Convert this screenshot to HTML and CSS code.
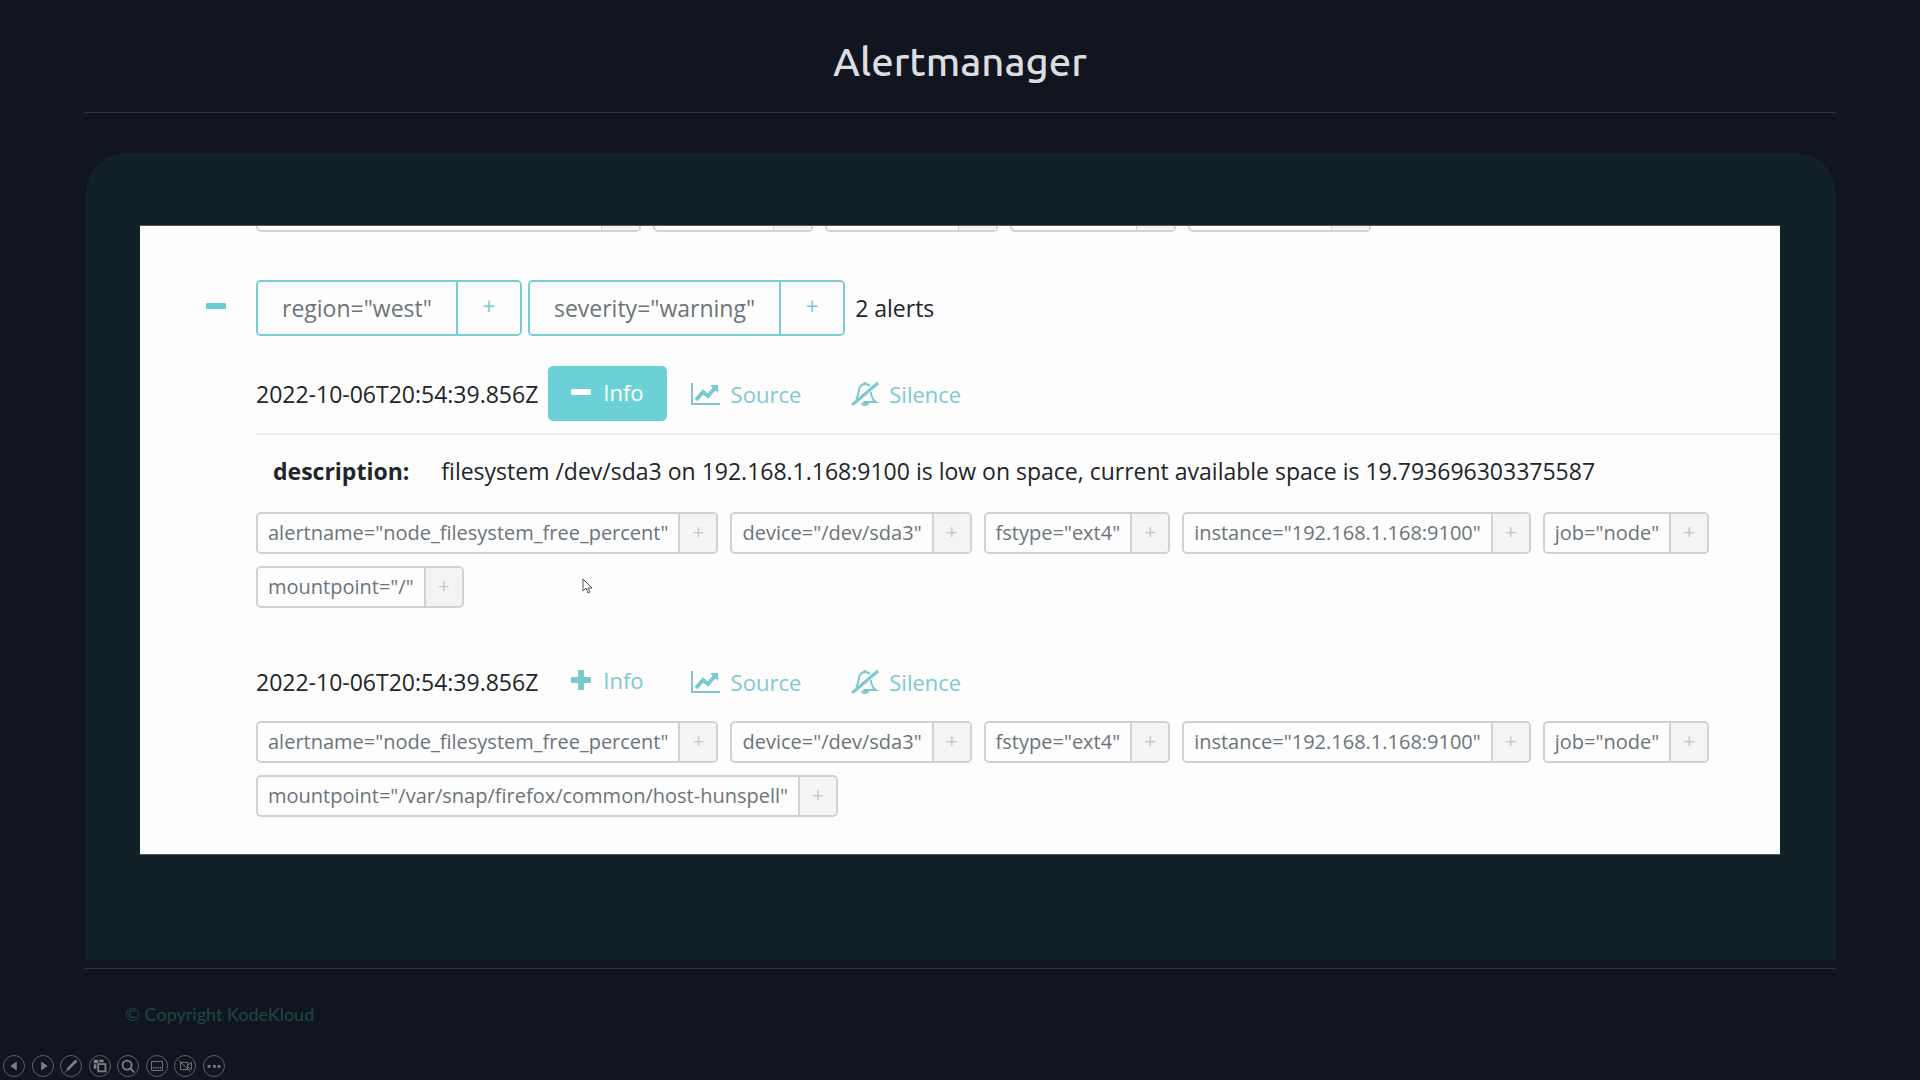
FILE: index.html
```html
<!DOCTYPE html>
<html lang="en">
<head>
    <meta charset="UTF-8">
    <meta name="viewport" content="width=device-width, initial-scale=1.0">
    <title>Alertmanager</title>
    <link rel="stylesheet" href="styles.css">
</head>
<body>
    <!-- shared icons -->
    <svg class="icon-defs" aria-hidden="true">
        <symbol id="icon-minus" viewBox="0 0 20 20"><rect x="0" y="7" width="20" height="6" rx="1"/></symbol>
        <symbol id="icon-plus" viewBox="0 0 20 20"><path d="M7 1q0-1 1-1h4q1 0 1 1v6h6q1 0 1 1v4q0 1-1 1h-6v6q0 1-1 1H8q-1 0-1-1v-6H1q-1 0-1-1V8q0-1 1-1h6z"/></symbol>
        <symbol id="icon-chart" viewBox="0 0 30 24">
            <path d="M1 1v21h28" fill="none" stroke="currentColor" stroke-width="2"/>
            <path d="M5 18l7-8 5 4 7-8" fill="none" stroke="currentColor" stroke-width="4"/>
            <path d="M19 3h8v8z"/>
        </symbol>
        <symbol id="icon-bell" viewBox="0 0 28 26">
            <path d="M5 18C8 15 7 9 9 6q2-3 5-3 3 0 5 2M20 11c0 5 2 8 5 10H12" fill="none" stroke="currentColor" stroke-width="2"/>
            <path d="M12 3a2 2 0 0 1 4 0zM10 22h8a4 3 0 0 1-8 0z"/>
            <path d="M1 24L27 2" fill="none" stroke="currentColor" stroke-width="3"/>
        </symbol>
    </svg>

    <header>
        <h1>Alertmanager</h1>
    </header>

    <main>
        <div class="panel">
            <div class="alerts">
                <div class="cut-row" aria-hidden="true">
                    <span class="cut cut-1"></span>
                    <span class="cut cut-2"></span>
                    <span class="cut cut-3"></span>
                    <span class="cut cut-4"></span>
                    <span class="cut cut-5"></span>
                </div>

                <div class="group">
                    <button class="collapse" aria-label="Collapse group"><svg><use href="#icon-minus"/></svg></button>
                    <span class="chip chip-large"><span>region="west"</span><button>+</button></span>
                    <span class="chip chip-large"><span>severity="warning"</span><button>+</button></span>
                    <span class="count">2 alerts</span>
                </div>

                <section class="alert">
                    <div class="alert-head">
                        <span class="time">2022-10-06T20:54:39.856Z</span>
                        <button class="action info active"><svg><use href="#icon-minus"/></svg>Info</button>
                        <a class="action source" href="#"><svg><use href="#icon-chart"/></svg>Source</a>
                        <a class="action silence" href="#"><svg><use href="#icon-bell"/></svg>Silence</a>
                    </div>
                    <table class="annotations">
                        <tr>
                            <th>description:</th>
                            <td>filesystem /dev/sda3 on 192.168.1.168:9100 is low on space, current available space is 19.793696303375587</td>
                        </tr>
                    </table>
                    <div class="labels">
                        <span class="chip"><span>alertname="node_filesystem_free_percent"</span><button>+</button></span>
                        <span class="chip"><span>device="/dev/sda3"</span><button>+</button></span>
                        <span class="chip"><span>fstype="ext4"</span><button>+</button></span>
                        <span class="chip"><span>instance="192.168.1.168:9100"</span><button>+</button></span>
                        <span class="chip"><span>job="node"</span><button>+</button></span>
                        <span class="chip"><span>mountpoint="/"</span><button>+</button></span>
                    </div>
                    <svg class="cursor" viewBox="0 0 11 16"><path d="M1 1v12l3-3 2 5 2-1-2-4h4z" fill="#fff" stroke="#555"/></svg>
                </section>

                <section class="alert">
                    <div class="alert-head">
                        <span class="time">2022-10-06T20:54:39.856Z</span>
                        <button class="action info"><svg><use href="#icon-plus"/></svg>Info</button>
                        <a class="action source" href="#"><svg><use href="#icon-chart"/></svg>Source</a>
                        <a class="action silence" href="#"><svg><use href="#icon-bell"/></svg>Silence</a>
                    </div>
                    <div class="labels">
                        <span class="chip"><span>alertname="node_filesystem_free_percent"</span><button>+</button></span>
                        <span class="chip"><span>device="/dev/sda3"</span><button>+</button></span>
                        <span class="chip"><span>fstype="ext4"</span><button>+</button></span>
                        <span class="chip"><span>instance="192.168.1.168:9100"</span><button>+</button></span>
                        <span class="chip"><span>job="node"</span><button>+</button></span>
                        <span class="chip"><span>mountpoint="/var/snap/firefox/common/host-hunspell"</span><button>+</button></span>
                    </div>
                </section>
            </div>
        </div>
    </main>

    <footer>
        <p>© Copyright KodeKloud</p>
    </footer>

    <nav class="slide-controls" aria-label="Slide controls">
        <button aria-label="Previous"><svg viewBox="0 0 22 22"><path class="fill" d="M14 6v10l-7-5z"/></svg></button>
        <button aria-label="Next"><svg viewBox="0 0 22 22"><path class="fill" d="M9 6v10l7-5z"/></svg></button>
        <button aria-label="Pen"><svg viewBox="0 0 22 22"><path d="M7 15l10-10" stroke-width="3"/><path d="M4 18l4-3"/></svg></button>
        <button aria-label="All slides"><svg viewBox="0 0 22 22"><path class="fill" d="M4 4h5v4H4zM10 4h5v3h-5zM4 9h3v5H4z"/><path d="M9 9h8v8H9z" stroke-width="2"/></svg></button>
        <button aria-label="Zoom"><svg viewBox="0 0 22 22"><circle cx="10" cy="10" r="5" stroke-width="2"/><path d="M13 13l5 5" stroke-width="2"/></svg></button>
        <button aria-label="Subtitles"><svg viewBox="0 0 22 22"><path d="M5 6h12v10H5zM7 14v-2m2 2v-2m2 2v-2m2 2v-2m2 2v-2"/></svg></button>
        <button aria-label="Camera"><svg viewBox="0 0 22 22"><path d="M6 7h8v8H6zM14 10l4-3v8l-4-3M4 5l13 12"/></svg></button>
        <button aria-label="More"><svg viewBox="0 0 22 22"><path class="fill" d="M4 10h3v3H4zM10 10h3v3h-3zM15 10h3v3h-3z"/></svg></button>
    </nav>
</body>
</html>
```

FILE: styles.css
```css
* {
    box-sizing: border-box;
}

body {
    margin: 0;
    min-height: 100vh;
    display: flex;
    flex-direction: column;
    background-color: #11151f;
    font-family: "Open Sans", "Noto Sans", sans-serif;
}

button {
    font-family: inherit;
    cursor: pointer;
}

.icon-defs {
    display: none;
}

header {
    margin: 0 84px;
    padding: 34px 0 22px;
    border-bottom: 1px solid #30343c;
}

h1 {
    margin: 0;
    color: #dcdddf;
    font-family: Ubuntu, "Noto Sans", sans-serif;
    font-size: 40px;
    font-weight: 500;
    line-height: 56px;
    text-align: center;
}

main {
    flex: 1;
    display: flex;
    margin: 0 84px;
    padding: 40px 0 8px 2px;
    border-bottom: 1px solid #30343c;
}

.panel {
    flex: 1;
    padding: 72px 56px 104px 54px;
    background-color: #122127;
    border-radius: 40px 40px 0 0;
}

.alerts {
    padding: 0 0 37px 116px;
    background-color: #fdfdfd;
    border-top: 1px solid #54585b;
    border-bottom: 1px solid #54585b;
    overflow: hidden;
    color: #212529;
    font-size: 23px;
    line-height: 32px;
}

/* label row scrolled almost out of view */
.cut-row {
    display: flex;
    gap: 12px;
    margin-bottom: 48px;
}

.cut {
    height: 6px;
    display: flex;
    justify-content: flex-end;
    border: 2px solid #ced4da;
    border-top: none;
    border-radius: 0 0 5px 5px;
}

.cut::after {
    content: "";
    width: 37px;
    background-color: #f5f5f5;
    border-left: 1px solid #ced4da;
}

.cut-1 {
    width: 385px;
}

.cut-2 {
    width: 160px;
}

.cut-3 {
    width: 173px;
}

.cut-4 {
    width: 166px;
}

.cut-5 {
    width: 183px;
}

.group {
    display: flex;
    align-items: center;
    gap: 6px;
    margin-left: -50px;
}

.collapse {
    display: flex;
    width: 44px;
    padding: 0 0 4px;
    border: none;
    background: none;
    color: #69cbd2;
}

.collapse svg,
.info svg {
    width: 20px;
    height: 20px;
}

svg {
    fill: currentColor;
}

.chip {
    display: inline-flex;
    height: 42px;
    border: 2px solid #cfd1d2;
    border-radius: 5px;
    color: #6c7478;
    font-size: 20px;
    line-height: 38px;
    overflow: hidden;
}

.chip span {
    padding: 0 10px;
}

.chip button {
    width: 38px;
    padding: 0 0 4px;
    border: none;
    border-left: 2px solid #cfd1d2;
    background-color: #f4f4f4;
    color: #c3c6c8;
    font-size: 20px;
}

.chip-large {
    height: 56px;
    border-color: #79cdd0;
    font-size: 23px;
    line-height: 52px;
}

.chip-large span {
    padding: 0 24px;
}

.chip-large button {
    width: 64px;
    border-color: #79cdd0;
    background-color: #fdfdfd;
    color: #79cdd0;
    font-size: 23px;
}

.count {
    margin-left: 4px;
}

.alert {
    position: relative;
}

.alert-head {
    display: flex;
    align-items: center;
    padding: 30px 0 12px;
}

.time {
    margin-right: 10px;
}

.action {
    display: flex;
    align-items: center;
    gap: 10px;
    color: #7bc9d0;
    font-size: 22px;
    line-height: 32px;
    text-decoration: none;
}

.info {
    height: 55px;
    gap: 12px;
    padding: 0 23px 4px;
    border: none;
    border-radius: 5px;
    background: none;
}

.info.active {
    background-color: #6bd1d7;
    color: #fff;
}

.source {
    margin-left: 24px;
}

.source svg {
    width: 30px;
    height: 24px;
}

.silence {
    margin-left: 50px;
}

.silence svg {
    width: 28px;
    height: 26px;
}

.annotations {
    width: 100%;
    border-top: 2px solid #ebedee;
    border-collapse: collapse;
}

.annotations th {
    width: 1px;
    padding: 20px 0 25px 17px;
    white-space: nowrap;
}

.annotations td {
    padding: 20px 0 25px 32px;
}

.labels {
    display: flex;
    flex-wrap: wrap;
    gap: 12px;
}

.alert + .alert {
    margin-top: 16px;
}

.cursor {
    position: absolute;
    top: 242px;
    left: 326px;
    width: 11px;
    height: 16px;
}

footer {
    padding: 31px 125px 27px;
}

footer p {
    margin: 0;
    color: #1f4643;
    font-family: Lato, sans-serif;
    font-size: 18px;
    line-height: 28px;
}

.slide-controls {
    display: flex;
    justify-content: space-between;
    width: 225px;
    padding: 0 0 3px 3px;
}

.slide-controls button {
    display: flex;
    padding: 0;
    width: 22px;
    height: 22px;
    border: 1px solid #5b5f67;
    border-radius: 50%;
    background: none;
    color: #7d8087;
}

.slide-controls svg {
    width: 20px;
    height: 20px;
    fill: none;
    stroke: currentColor;
}

.slide-controls .fill {
    fill: currentColor;
    stroke: none;
}
```
